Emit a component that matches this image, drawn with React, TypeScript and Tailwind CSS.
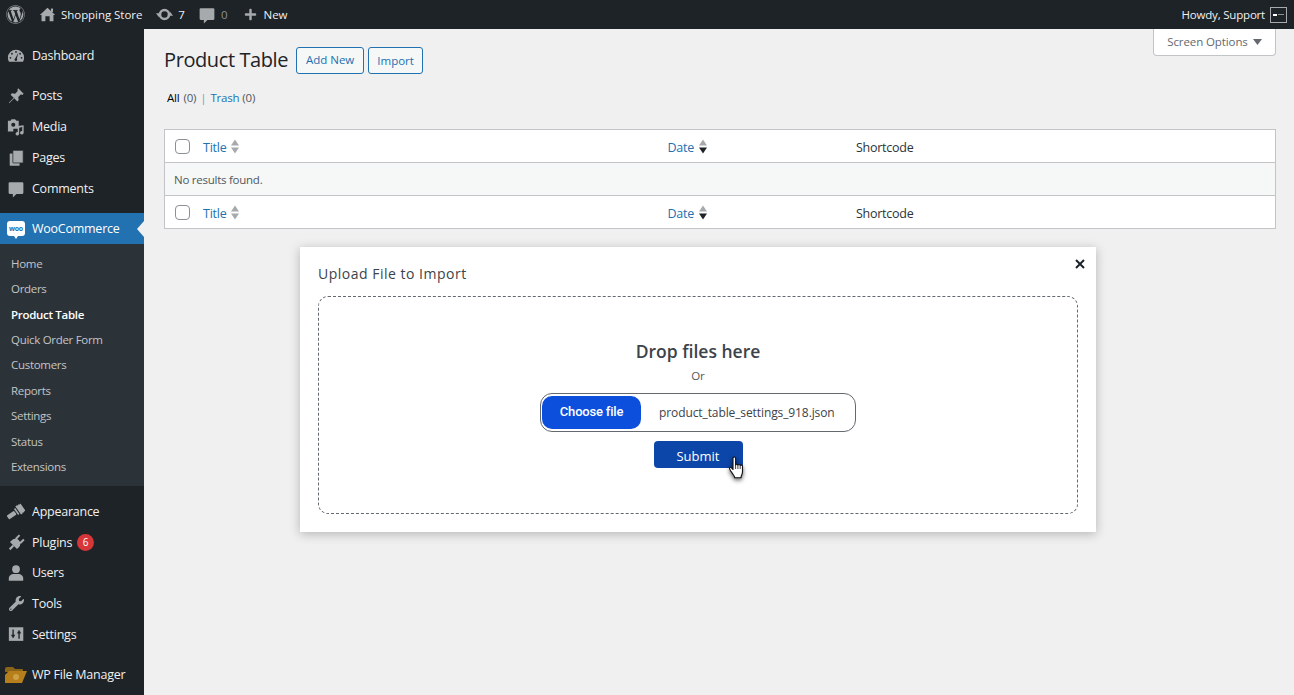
import React from 'react'
import { FaWordpress, FaPlus, FaWrench } from 'react-icons/fa'

const font = "font-['Open_Sans','Noto_Sans',sans-serif]"
const GRAY = '#a7aaad'
const DARK = '#1d2327'

const Ico = ({ size = 18, children }: { size?: number; children: React.ReactNode }) => (
  <svg width={size} height={size} viewBox="0 0 20 20" fill={GRAY} className="shrink-0">{children}</svg>
)

const SortArrows = ({ dark }: { dark?: boolean }) => (
  <svg width="10" height="15" viewBox="0 0 10 15" className="ml-[4px]">
    <path d="M5 0.500 9 6.500H1z" fill={GRAY} />
    <path d="M5 14.500 1 8.500h8z" fill={dark ? DARK : GRAY} />
  </svg>
)

const HomeIcon = () => (
  <Ico size={17}>
    <path d="M10 2 19 10.500H17V18H12.500V12H7.500V18H3V10.500H1z" />
    <rect x="14" y="3" width="2.500" height="4" />
  </Ico>
)

const UpdateIcon = () => (
  <Ico size={17}>
    <circle cx="10" cy="10" r="5.300" fill="none" stroke={GRAY} strokeWidth="3" />
    <path d="M0 8.500h6.500L3.200 13zM13.500 11.500H20L16.800 7z" />
  </Ico>
)

const CommentIcon = () => (
  <Ico>
    <path d="M3 2.500h14a1.200 1.200 0 0 1 1.200 1.200v10.600a1.200 1.200 0 0 1-1.200 1.200h-6.500L6.500 19.500V15.500H3a1.200 1.200 0 0 1-1.200-1.200V3.700A1.200 1.200 0 0 1 3 2.500z" />
  </Ico>
)

const DashboardIcon = () => (
  <Ico>
    <path d="M10 3a9 9 0 0 0-9 9c0 1.600.4 3 1.200 4.300h15.600c.8-1.300 1.200-2.700 1.200-4.300a9 9 0 0 0-9-9z" />
    <g fill={DARK}>
      <circle cx="10" cy="5.500" r="1" />
      <circle cx="5.500" cy="7.500" r="1" />
      <circle cx="14.500" cy="7.500" r="1" />
      <circle cx="3.800" cy="12" r="1" />
      <circle cx="16.200" cy="12" r="1" />
      <path d="M12.600 6.500 10.900 13a1.500 1.500 0 1 1-1.800-.3z" />
    </g>
  </Ico>
)

const PinIcon = () => (
  <Ico>
    <path d="M12.500 1.500 18.500 7.500 17 8.800 15.500 8 12.500 11 13 14.500 11.500 16 8 12.500 2.500 18 2 17.500 7.500 12 4 8.500 5.500 7 9 7.500 12 4.500 11.500 3z" />
  </Ico>
)

const MediaIcon = () => (
  <Ico>
    <path fillRule="evenodd" d="M1 3h3l1-1.500h4L10.500 3H13v9H7v3H1zM7 5.200a2.300 2.300 0 1 0 0 4.600 2.300 2.300 0 0 0 0-4.600z" />
    <path d="M18.500 8v8.500a2 2 0 1 1-1.600-2V10l-3.400.8v6.700a2 2 0 1 1-1.600-2V9z" />
  </Ico>
)

const PagesIcon = () => (
  <Ico>
    <rect x="3" y="5" width="11" height="13.500" rx="0.5" />
    <rect x="6.500" y="1.500" width="11.500" height="14" rx="0.5" stroke={DARK} strokeWidth="0.8" />
  </Ico>
)

const BrushIcon = () => (
  <Ico>
    <g transform="rotate(-35 10 10)">
      <rect x="-1" y="7.500" width="10" height="5" rx="1" />
      <rect x="10" y="6" width="1.800" height="8" />
      <path d="M13 4.500h2l1 1 1-1 1 1 1.500-.5v10l-1.500-.5-1 1-1-1-1 1h-2z" />
    </g>
  </Ico>
)

const PlugIcon = () => (
  <Ico>
    <g transform="rotate(-45 10 10)">
      <path d="M6 4.500h3a5.500 5.500 0 0 1 0 11H6z" />
      <rect x="13" y="5.500" width="6" height="2.200" />
      <rect x="13" y="12.300" width="6" height="2.200" />
      <rect x="0" y="8.800" width="6" height="2.400" />
    </g>
  </Ico>
)

const UserIcon = () => (
  <Ico>
    <circle cx="10" cy="5.800" r="4.300" />
    <path d="M2 18.500v-3c0-2.600 2.800-4.500 5-4.500h6c2.200 0 5 1.900 5 4.500v3z" />
  </Ico>
)

const SettingsIcon = () => (
  <Ico size={17}>
    <rect x="1" y="1.500" width="17" height="16" />
    <g stroke={DARK} strokeWidth="1.600" fill={DARK}>
      <path d="M6 4v8" />
      <path d="M4 10.500h4L6 14z" strokeWidth="0.6" />
      <path d="M13 15V7" />
      <path d="M11 8.500h4L13 5z" strokeWidth="0.6" />
    </g>
  </Ico>
)

const WooIcon = () => (
  <div className="relative flex h-[15px] w-[18px] items-center justify-center rounded-[3px] bg-white">
    <span className="text-[7px] font-bold leading-none tracking-[-0.3px] text-[#2271b1]">woo</span>
    <span className="absolute bottom-[-3px] left-[7px] h-0 w-0 border-x-[2px] border-t-[3px] border-x-transparent border-t-white" />
  </div>
)

const FolderIcon = () => (
  <svg width="22" height="17" viewBox="0 0 22 17" className="mr-[1px]">
    <path fill="#8a6418" d="M0 3q0-2 2-2h6l2 2h7q1 0 1 1v2H0z" />
    <path fill="#b67f1c" d="M4 5h18l-5 12H0V9z" />
    <circle cx="11" cy="11" r="3" fill="#cfa044" />
  </svg>
)

const HandCursor = () => (
  <svg width="18" height="24" viewBox="0 0 18 24" className="absolute left-[74px] top-[15px] drop-shadow-[0_2px_2px_rgba(0,0,0,0.6)]">
    <path
      fill="#fff"
      stroke="#111"
      strokeWidth="1.100"
      strokeLinejoin="round"
      d="M5 2.200c0-1.600 2.600-1.600 2.600 0V9c0-1 2.300-1 2.300.2 0-1 2.300-1 2.300.3 0-.9 2.300-.8 2.300.6v5.400c0 2.500-.9 3.400-1.400 5v1.200H6.600V21c-.6-1.700-2.200-3.300-3.600-5.600C2 13.800 1 12.500 1.500 11.700c.7-1 2-.2 3.500 1.800z"
    />
    <path d="M7.600 9v4M9.900 9.200V13M12.200 9.500V13" stroke="#111" strokeWidth="0.8" />
  </svg>
)

type MenuItem = { label: string; icon: React.ReactNode; h: string; badge?: string }

const topItems: MenuItem[] = [
  { label: 'Posts', icon: <PinIcon />, h: 'h-[31px]' },
  { label: 'Media', icon: <MediaIcon />, h: 'h-[31px]' },
  { label: 'Pages', icon: <PagesIcon />, h: 'h-[31px]' },
  { label: 'Comments', icon: <CommentIcon />, h: 'h-[31px]' },
]

const bottomItems: MenuItem[] = [
  { label: 'Appearance', icon: <BrushIcon />, h: 'h-[31px]' },
  { label: 'Plugins', icon: <PlugIcon />, h: 'h-[31px]', badge: '6' },
  { label: 'Users', icon: <UserIcon />, h: 'h-[30px]' },
  { label: 'Tools', icon: <FaWrench size={15} />, h: 'h-[31px]' },
  { label: 'Settings', icon: <SettingsIcon />, h: 'h-[31px]' },
]

const subItems = ['Home', 'Orders', 'Product Table', 'Quick Order Form', 'Customers', 'Reports', 'Settings', 'Status', 'Extensions']

const SideRow = ({ item }: { item: MenuItem }) => (
  <div className={`flex items-center ${item.h}`}>
    <span className="flex w-[32px] justify-center text-[#a7aaad]">{item.icon}</span>
    <span className={`text-[12.5px] tracking-[-0.25px] text-[#f0f0f1] ${item.h === 'h-[31px]' ? 'mt-[2px]' : ''}`}>{item.label}</span>
    {item.badge && (
      <span className="ml-[5px] flex h-[17px] w-[17px] items-center justify-center rounded-full bg-[#d63638] text-[10px] text-white">{item.badge}</span>
    )}
  </div>
)

const HeadRow = () => (
  <div className="flex h-[32px] items-center bg-white text-[12.5px] tracking-[-0.25px]">
    <span className="ml-[10px] h-[15px] w-[15px] rounded-[4px] border border-[#8c8f94] bg-white" />
    <span className="ml-[13px] pt-[4px] text-[#2271b1]">Title</span>
    <SortArrows />
    <span className="ml-[427px] pt-[4px] text-[#2271b1]">Date</span>
    <SortArrows dark />
    <span className="ml-[148px] pt-[4px] text-[#2c3338]">Shortcode</span>
  </div>
)

export default function App() {
  return (
    <div className={`${font} flex h-[695px] w-[1294px] flex-col overflow-hidden bg-[#f0f0f1]`}>
      {/* Admin bar */}
      <div className="flex h-[29px] shrink-0 items-center bg-[#1d2327] text-[11.5px] text-[#f0f0f1]">
        <FaWordpress size={19} className="ml-[6px] text-[#a7aaad]" />
        <span className="ml-[14px]"><HomeIcon /></span>
        <span className="ml-[5px] tracking-[-0.05px]">Shopping Store</span>
        <span className="ml-[14px]"><UpdateIcon /></span>
        <span className="ml-[5px]">7</span>
        <span className="ml-[13px]"><CommentIcon /></span>
        <span className="ml-[5px] text-[#8c8f94]">0</span>
        <FaPlus size={13} className="ml-[17px] text-[#a7aaad]" />
        <span className="ml-[6px]">New</span>
        <span className="ml-auto tracking-[-0.2px]">Howdy, Support</span>
        <div className="ml-[5px] mr-[7px] flex h-[16px] w-[17px] items-center justify-center gap-[1px] border border-[#a7aaad] bg-[#1d2327]">
          <span className="h-[2px] w-[4px] bg-white" />
          <span className="h-[1px] w-[6px] bg-[#8c8f94]" />
        </div>
      </div>

      <div className="flex min-h-0 flex-1">
        {/* Sidebar */}
        <div className="w-[144px] shrink-0 bg-[#1d2327]">
          <div className="mt-[12px] flex h-[30px] items-center">
            <span className="flex w-[32px] justify-center"><DashboardIcon /></span>
            <span className="text-[12.5px] tracking-[-0.25px] text-[#f0f0f1]">Dashboard</span>
          </div>
          <div className="mt-[9px]">
            {topItems.map((item) => <SideRow key={item.label} item={item} />)}
          </div>
          <div className="relative mt-[9px] flex h-[31px] items-center bg-[#2271b1]">
            <span className="flex w-[32px] justify-center"><WooIcon /></span>
            <span className="mt-[2px] text-[12.5px] tracking-[-0.25px] text-white">WooCommerce</span>
            <span className="absolute right-0 top-[8px] h-0 w-0 border-y-[8px] border-r-[7px] border-y-transparent border-r-[#f0f0f1]" />
          </div>
          <div className="flex h-[242px] flex-col justify-center bg-[#2c3338]">
            {subItems.map((s) => (
              <div
                key={s}
                className={`flex h-[25.4px] items-center pl-[11px] text-[11.5px] tracking-[-0.3px] ${s === 'Product Table' ? 'font-semibold text-white' : 'text-[#c3c4c7]'}`}
              >
                {s}
              </div>
            ))}
          </div>
          <div className="mt-[10px]">
            {bottomItems.map((item) => <SideRow key={item.label} item={item} />)}
          </div>
          <div className="mt-[9px] flex h-[31px] items-center">
            <span className="flex w-[32px] justify-center"><FolderIcon /></span>
            <span className="mt-[2px] text-[12.5px] tracking-[-0.25px] text-[#f0f0f1]">WP File Manager</span>
          </div>
        </div>

        {/* Content */}
        <div className="relative min-w-0 flex-1 pl-[20px] pr-[18px]">
          <div className="absolute right-[18px] top-0 flex h-[27px] w-[123px] items-center justify-center gap-[5px] rounded-b-[4px] border border-t-0 border-[#c3c4c7] bg-white text-[11.5px] tracking-[-0.1px] text-[#646970]">
            Screen Options
            <svg width="9" height="6" viewBox="0 0 9 6"><path d="M0 0h9L4.500 6z" fill="#646970" /></svg>
          </div>

          <div className="flex items-center pt-[17px]">
            <h1 className="text-[20px] leading-[26px] tracking-[-0.4px] text-[#1d2327]">Product Table</h1>
            <button className="ml-[8px] h-[27px] w-[68px] rounded-[3px] border border-[#2271b1] bg-[#f6f7f7] text-[11.5px] text-[#2271b1]">Add New</button>
            <button className="ml-[4px] mt-[1px] h-[27px] w-[55px] rounded-[3px] border border-[#2271b1] bg-[#f6f7f7] text-[11.5px] text-[#2271b1]">Import</button>
          </div>

          <div className="mt-[15px] flex h-[18px] items-center text-[11.5px] tracking-[-0.2px] text-[#50575e]">
            <span className="ml-[3px] text-black">All</span>
            <span className="ml-[4px]">(0)</span>
            <span className="mx-[4px] text-[#6a9ec7]">|</span>
            <span className="text-[#2271b1]">Trash</span>
            <span className="ml-[3px]">(0)</span>
          </div>

          <div className="mt-[22px] border border-[#c3c4c7]">
            <HeadRow />
            <div className="flex h-[34px] items-center border-y border-[#c3c4c7] bg-[#f6f7f7] pl-[9px] pt-[2px] text-[11.5px] tracking-[-0.25px] text-[#50575e]">No results found.</div>
            <HeadRow />
          </div>

          {/* Upload dialog */}
          <div className="relative ml-[136px] mt-[18px] h-[285px] w-[796px] bg-white px-[18px] pt-[17px] shadow-[0_2px_10px_rgba(0,0,0,0.25)]">
            <svg width="10" height="10" viewBox="0 0 10 10" className="absolute right-[11px] top-[12px]">
              <path d="M1 1l8 8M9 1l-8 8" stroke={DARK} strokeWidth="2" />
            </svg>
            <div className="text-[14px] leading-[20px] tracking-[0.5px] text-[#3c434a]">Upload File to Import</div>
            <div className="mt-[12px] flex h-[218px] flex-col items-center rounded-[10px] border border-dashed border-[#646970] pt-[42px]">
              <div className="text-[17.5px] font-semibold leading-[24px] text-[#3c434a]">Drop files here</div>
              <div className="mt-[5px] text-[11.5px] leading-[16px] text-[#50575e]">Or</div>
              <div className="mt-[9px] flex h-[39px] w-[316px] items-center rounded-[12px] border border-[#646970] bg-white pl-[1px]">
                <div className="flex h-[33px] w-[99px] items-center justify-center rounded-[10px] bg-[#0b4fdc] pb-[2px] font-['Roboto',sans-serif] text-[13px] font-medium tracking-[-0.2px] text-white">Choose file</div>
                <span className="ml-[18px] text-[12px] tracking-[-0.1px] text-[#3c434a]">product_table_settings_918.json</span>
              </div>
              <div className="relative mt-[9px] flex h-[27px] w-[89px] items-center justify-center rounded-[4px] bg-[#0c46a8] pt-[4px] text-[13px] font-medium text-white">
                Submit
                <HandCursor />
              </div>
            </div>
          </div>
        </div>
      </div>
    </div>
  )
}
